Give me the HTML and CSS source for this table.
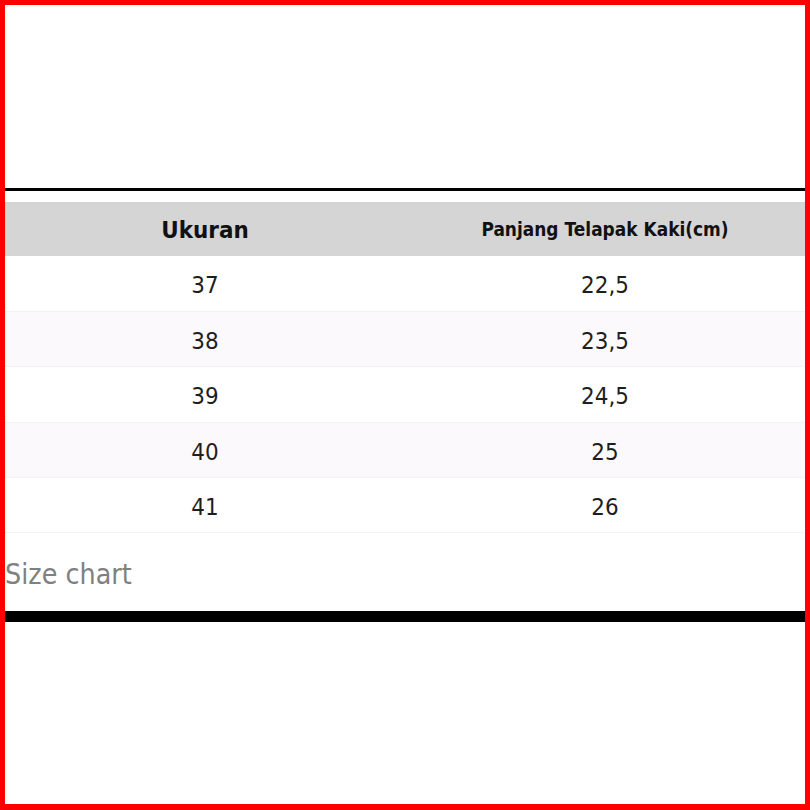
FILE: index.html
```html
<!DOCTYPE html>
<html>
<head>
<meta charset="utf-8">
<link rel="stylesheet" href="styles.css">
</head>
<body>
<div class="frame">
  <div class="chart">
    <table class="size-table">
      <thead>
        <tr>
          <th class="h-main"><span>Ukuran</span></th>
          <th class="h-sub"><span>Panjang Telapak Kaki(cm)</span></th>
        </tr>
      </thead>
      <tbody>
        <tr><td><span>37</span></td><td><span>22,5</span></td></tr>
        <tr class="alt"><td><span>38</span></td><td><span>23,5</span></td></tr>
        <tr><td><span>39</span></td><td><span>24,5</span></td></tr>
        <tr class="alt"><td><span>40</span></td><td><span>25</span></td></tr>
        <tr><td><span>41</span></td><td><span>26</span></td></tr>
      </tbody>
    </table>
    <div class="caption"><span>Size chart</span></div>
    <div class="bar"></div>
  </div>
</div>
</body>
</html>
```

FILE: styles.css
```css
html, body {
  margin: 0;
  padding: 0;
  background: #ffffff;
}

.frame {
  box-sizing: border-box;
  width: 810px;
  height: 810px;
  border: 5px solid #ff0000;
  border-bottom-width: 6px;
  background: #ffffff;
  padding-top: 183px;
  font-family: "DejaVu Sans", sans-serif;
}

.chart {
  border-top: 3px solid #000000;
  padding-top: 11px;
}

.size-table {
  width: 800px;
  border-collapse: collapse;
  table-layout: fixed;
}

.size-table th,
.size-table td {
  width: 50%;
  padding: 0;
  text-align: center;
  vertical-align: middle;
}

.size-table th {
  background: #d5d5d5;
  height: 54px;
  color: #111111;
  font-weight: bold;
}

.size-table span {
  display: inline-block;
  transform: scaleY(1.1);
}

.h-main {
  font-size: 21.5px;
}

.h-sub {
  font-size: 17px;
}

.size-table td {
  height: 55.4px;
  box-sizing: border-box;
  font-size: 21.5px;
  color: #1e1e1e;
  border-bottom: 1px solid #f3f2f5;
  padding-top: 3px;
}

.size-table tr.alt td {
  background: #fbf9fc;
}

.caption {
  margin-top: 27px;
  font-size: 25.5px;
  line-height: 28px;
  color: #808080;
}

.caption span {
  display: inline-block;
  transform: scaleY(1.1);
}

.bar {
  margin-top: 23px;
  height: 11px;
  background: #000000;
}
```
